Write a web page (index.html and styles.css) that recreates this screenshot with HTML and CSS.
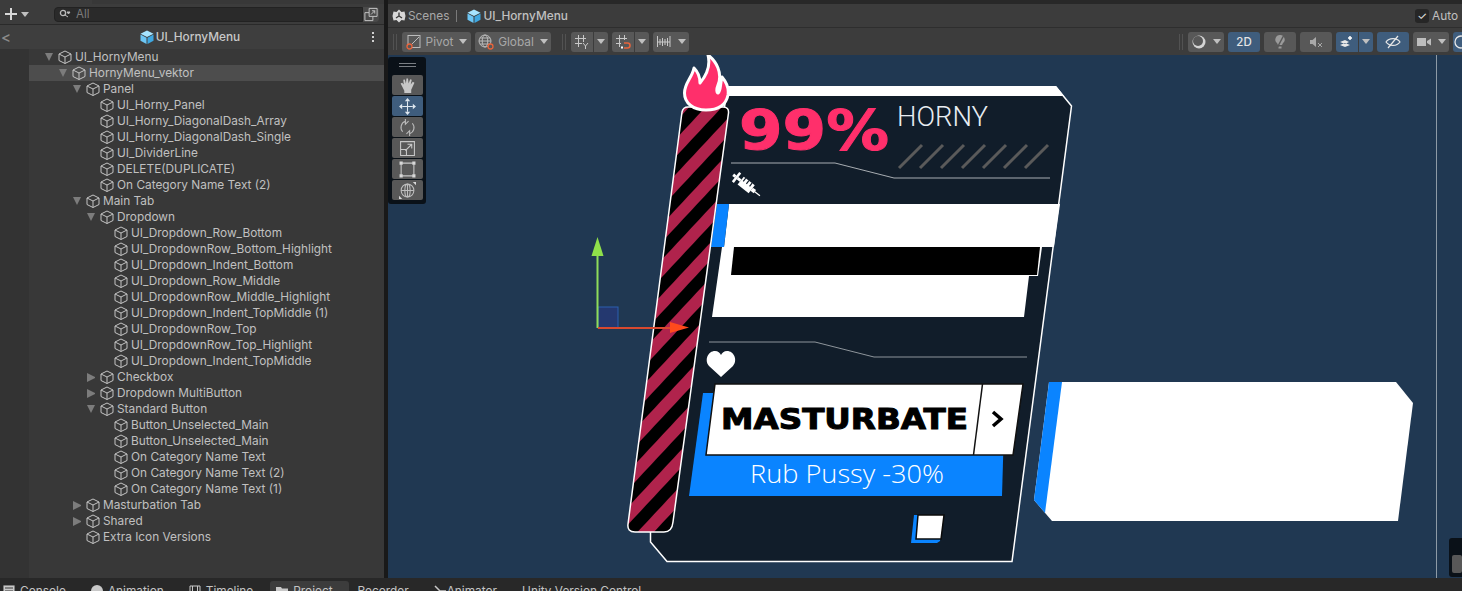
FILE: index.html
```html
<!DOCTYPE html>
<html lang="en">
<head>
    <meta charset="UTF-8">
    <title>UI_HornyMenu - Scene</title>
    <link rel="stylesheet" href="styles.css">
</head>
<body>

    <svg class="defs" width="0" height="0">
        <symbol id="cube" viewBox="0 0 14 14">
            <path d="M7 1 L13 4 V10.5 L7 13.5 L1 10.5 V4 Z M1 4 L7 7 L13 4 M7 7 V13.5" fill="none" stroke="currentColor" stroke-width="1" stroke-linejoin="round"/>
        </symbol>
        <symbol id="bluecube" viewBox="0 0 14 14">
            <path d="M7 .5 L13.5 3.8 L7 7 L.5 3.8 Z" fill="#a6e4ff"/>
            <path d="M.5 4.6 L6.5 7.7 V14 L.5 10.8 Z" fill="#6cc6f5"/>
            <path d="M13.5 4.6 L7.5 7.7 V14 L13.5 10.8 Z" fill="#3fa7e0"/>
        </symbol>
    </svg>

    <div class="app">
        <div class="main">

            <!-- hierarchy -->
            <div class="hierarchy">
                <div class="h-toolbar">
                    <svg class="plus" viewBox="0 0 12 12"><path d="M6 0 V12 M0 6 H12" stroke="#d8d8d8" stroke-width="2"/></svg>
                    <span class="caret small"></span>
                    <div class="search">
                        <svg class="search-icon" viewBox="0 0 12 12"><circle cx="4" cy="5" r="2.6" fill="none" stroke="#bbb" stroke-width="1.3"/><path d="M6 7 L9 9 M8 4 H11 L9.500 6 Z" stroke="#bbb" fill="#bbb"/></svg>
                        <span>All</span>
                    </div>
                    <svg class="popout" viewBox="0 0 16 16"><path d="M6 1.500 H14.500 V10 H10 V14.500 H1.500 V6 H6 Z M6 6 V10 H10 M8 8 L12 4 M9 4 H12 V7" fill="none" stroke="#c8c8c8"/></svg>
                </div>
                <div class="breadcrumb">
                    <span class="back">&lt;</span>
                    <div class="crumb-title">
                        <svg class="bluecube"><use href="#bluecube"/></svg>
                        <span>UI_HornyMenu</span>
                    </div>
                    <span class="dots"><i></i><i></i><i></i></span>
                </div>
                <div class="tree">
                    <div class="row d0 open"><span class="arrow"></span><svg class="cube"><use href="#cube"/></svg>UI_HornyMenu</div>
                    <div class="row d1 open selected"><span class="arrow"></span><svg class="cube"><use href="#cube"/></svg>HornyMenu_vektor</div>
                    <div class="row d2 open"><span class="arrow"></span><svg class="cube"><use href="#cube"/></svg>Panel</div>
                    <div class="row d3"><span class="arrow"></span><svg class="cube"><use href="#cube"/></svg>UI_Horny_Panel</div>
                    <div class="row d3"><span class="arrow"></span><svg class="cube"><use href="#cube"/></svg>UI_Horny_DiagonalDash_Array</div>
                    <div class="row d3"><span class="arrow"></span><svg class="cube"><use href="#cube"/></svg>UI_Horny_DiagonalDash_Single</div>
                    <div class="row d3"><span class="arrow"></span><svg class="cube"><use href="#cube"/></svg>UI_DividerLine</div>
                    <div class="row d3"><span class="arrow"></span><svg class="cube"><use href="#cube"/></svg>DELETE(DUPLICATE)</div>
                    <div class="row d3"><span class="arrow"></span><svg class="cube"><use href="#cube"/></svg>On Category Name Text (2)</div>
                    <div class="row d2 open"><span class="arrow"></span><svg class="cube"><use href="#cube"/></svg>Main Tab</div>
                    <div class="row d3 open"><span class="arrow"></span><svg class="cube"><use href="#cube"/></svg>Dropdown</div>
                    <div class="row d4"><span class="arrow"></span><svg class="cube"><use href="#cube"/></svg>UI_Dropdown_Row_Bottom</div>
                    <div class="row d4"><span class="arrow"></span><svg class="cube"><use href="#cube"/></svg>UI_DropdownRow_Bottom_Highlight</div>
                    <div class="row d4"><span class="arrow"></span><svg class="cube"><use href="#cube"/></svg>UI_Dropdown_Indent_Bottom</div>
                    <div class="row d4"><span class="arrow"></span><svg class="cube"><use href="#cube"/></svg>UI_Dropdown_Row_Middle</div>
                    <div class="row d4"><span class="arrow"></span><svg class="cube"><use href="#cube"/></svg>UI_DropdownRow_Middle_Highlight</div>
                    <div class="row d4"><span class="arrow"></span><svg class="cube"><use href="#cube"/></svg>UI_Dropdown_Indent_TopMiddle (1)</div>
                    <div class="row d4"><span class="arrow"></span><svg class="cube"><use href="#cube"/></svg>UI_DropdownRow_Top</div>
                    <div class="row d4"><span class="arrow"></span><svg class="cube"><use href="#cube"/></svg>UI_DropdownRow_Top_Highlight</div>
                    <div class="row d4"><span class="arrow"></span><svg class="cube"><use href="#cube"/></svg>UI_Dropdown_Indent_TopMiddle</div>
                    <div class="row d3 closed"><span class="arrow"></span><svg class="cube"><use href="#cube"/></svg>Checkbox</div>
                    <div class="row d3 closed"><span class="arrow"></span><svg class="cube"><use href="#cube"/></svg>Dropdown MultiButton</div>
                    <div class="row d3 open"><span class="arrow"></span><svg class="cube"><use href="#cube"/></svg>Standard Button</div>
                    <div class="row d4"><span class="arrow"></span><svg class="cube"><use href="#cube"/></svg>Button_Unselected_Main</div>
                    <div class="row d4"><span class="arrow"></span><svg class="cube"><use href="#cube"/></svg>Button_Unselected_Main</div>
                    <div class="row d4"><span class="arrow"></span><svg class="cube"><use href="#cube"/></svg>On Category Name Text</div>
                    <div class="row d4"><span class="arrow"></span><svg class="cube"><use href="#cube"/></svg>On Category Name Text (2)</div>
                    <div class="row d4"><span class="arrow"></span><svg class="cube"><use href="#cube"/></svg>On Category Name Text (1)</div>
                    <div class="row d2 closed"><span class="arrow"></span><svg class="cube"><use href="#cube"/></svg>Masturbation Tab</div>
                    <div class="row d2 closed"><span class="arrow"></span><svg class="cube"><use href="#cube"/></svg>Shared</div>
                    <div class="row d2"><span class="arrow"></span><svg class="cube"><use href="#cube"/></svg>Extra Icon Versions</div>
                </div>
            </div>

            <!-- scene -->
            <div class="scene">
                <div class="scene-top">
                    <svg class="unity" viewBox="0 0 14 14"><path d="M7 .5 L9.500 3 L12.500 2.500 L13.500 7 L12.500 11.500 L9.500 11 L7 13.500 L4.500 11 L1.500 11.500 L.5 7 L1.500 2.500 L4.500 3 Z" fill="#d8d8d8"/><path d="M7 3.500 V7 L4 9 M7 7 L10 9" stroke="#3c3c3c" stroke-width="1.400" fill="none"/></svg>
                    <span class="scenes-label">Scenes</span>
                    <span class="sep"></span>
                    <svg class="bluecube"><use href="#bluecube"/></svg>
                    <span class="prefab-name">UI_HornyMenu</span>
                    <label class="auto"><span class="check">&#10003;</span>Auto</label>
                </div>

                <div class="scene-toolbar">
                    <span class="grip"></span>
                    <div class="btn w-pivot">
                        <svg class="ico" viewBox="0 0 16 16"><rect x="2" y="1.500" width="12" height="12" fill="none" stroke="#bbb"/><path d="M3 13 L13 3" stroke="#bbb"/><circle cx="3.500" cy="12.500" r="2.500" fill="#585858" stroke="#e8643c" stroke-width="1.300"/></svg>
                        <span>Pivot</span><span class="caret"></span>
                    </div>
                    <div class="btn w-global">
                        <svg class="ico" viewBox="0 0 16 16"><circle cx="7" cy="7" r="6" fill="none" stroke="#bbb"/><ellipse cx="7" cy="7" rx="2.800" ry="6" fill="none" stroke="#bbb"/><path d="M1 7 H13 M2 4 H12 M2 10 H12" stroke="#bbb"/><circle cx="12.500" cy="12.500" r="2.500" fill="#585858" stroke="#e8643c" stroke-width="1.300"/></svg>
                        <span>Global</span><span class="caret"></span>
                    </div>
                    <span class="grip grip-mid"></span>
                    <div class="btn w-grid left">
                        <svg class="ico" viewBox="0 0 16 16"><path d="M1 4.500 H12 M1 9.500 H8 M4.500 1 V13 M9.500 1 V8 M9 9 L11.500 12 L14 9 M11.500 12 V15" fill="none" stroke="#c8c8c8"/></svg>
                    </div>
                    <div class="btn w-drop right"><span class="caret"></span></div>
                    <div class="btn w-grid left">
                        <svg class="ico" viewBox="0 0 16 16"><path d="M1 4.500 H12 M1 9.500 H6 M4.500 1 V13 M9.500 1 V6" fill="none" stroke="#c8c8c8"/><path d="M9 9 H12.500 A2.500 2.500 0 0 1 12.500 14 H9" fill="none" stroke="#e8643c" stroke-width="1.600"/><rect x="6" y="12.500" width="2" height="2" fill="#fff"/></svg>
                    </div>
                    <div class="btn w-drop right"><span class="caret"></span></div>
                    <div class="btn w-inc">
                        <svg class="ico" viewBox="0 0 16 16"><path d="M1.500 2 V13 M14 2 V13 M1 8 H14 M4 5 V11 M6.500 4 V12 M9 5 V11 M11.500 4 V12" fill="none" stroke="#c8c8c8"/></svg>
                        <span class="caret"></span>
                    </div>

                    <span class="spacer"></span>

                    <span class="grip"></span>
                    <div class="btn w-shade">
                        <svg class="ico" viewBox="0 0 16 16"><circle cx="8" cy="8" r="6.500" fill="#d4d4d4"/><circle cx="7" cy="7" r="5" fill="#585858"/></svg>
                        <span class="caret"></span>
                    </div>
                    <div class="btn w-32 on label-2d">2D</div>
                    <div class="btn w-32">
                        <svg class="ico" viewBox="0 0 16 16"><path d="M8 1 A4.500 4.500 0 0 1 11 9 L10 11 H6 L5 9 A4.500 4.500 0 0 1 8 1 Z M6.500 12.500 H9.500 V14.500 H6.500 Z" fill="#9a9a9a"/><path d="M12 1 L5 14" stroke="#585858" stroke-width="1.500"/></svg>
                    </div>
                    <div class="btn w-32">
                        <svg class="ico" viewBox="0 0 16 16"><path d="M2 6 H4.500 L8 3 V13 L4.500 10 H2 Z" fill="#a8a8a8"/><path d="M10 9 L14 13 M14 9 L10 13" stroke="#a8a8a8"/></svg>
                    </div>
                    <div class="btn w-fx on left">
                        <svg class="ico" viewBox="0 0 16 16"><path d="M1 8 L6 6 L10 8 L6 10 Z M1 11 L6 13 L11 11 L6 9 Z" fill="#e8e8e8"/><path d="M11 2 V6 M9 4 H13" stroke="#fff" stroke-width="1.500"/></svg>
                    </div>
                    <div class="btn w-drop on right"><span class="caret"></span></div>
                    <div class="btn w-32 on">
                        <svg class="ico" viewBox="0 0 16 16"><path d="M1 8 C4 3.500 12 3.500 15 8 C12 12.500 4 12.500 1 8 Z" fill="none" stroke="#e8e8e8" stroke-width="1.200"/><path d="M3 14 L13 2" stroke="#e8e8e8" stroke-width="1.200"/></svg>
                    </div>
                    <div class="btn w-cam">
                        <svg class="ico" viewBox="0 0 16 16"><rect x="1" y="4" width="9" height="8" fill="#bdbdbd"/><path d="M11 7 L15 4.500 V11.500 L11 9 Z" fill="#bdbdbd"/></svg>
                        <span class="caret"></span>
                    </div>
                    <div class="btn w-end on">
                        <svg class="ico" viewBox="0 0 16 16"><circle cx="8" cy="8" r="6" fill="none" stroke="#e8e8e8" stroke-width="1.300"/></svg>
                    </div>
                </div>

                <div class="viewport">
                    <!-- the drawn menu, coordinates are page pixels -->
                    <svg class="canvas" viewBox="388 55 1074 523">
                        <defs>
                            <pattern id="stripes" width="24" height="24" patternUnits="userSpaceOnUse" patternTransform="translate(650 501) rotate(-47)">
                                <rect width="24" height="24" fill="#b0234c"/>
                                <rect width="24" height="12" fill="#000"/>
                            </pattern>
                        </defs>

                        <line class="frame-line" x1="1436.500" y1="55" x2="1436.500" y2="578"/>

                        <!-- gizmo -->
                        <rect x="598" y="307" width="20" height="21" fill="#24386f" stroke="#2a5fb0"/>
                        <line x1="597.500" y1="328" x2="597.500" y2="256" stroke="#8fdc5a" stroke-width="2"/>
                        <path d="M597.500 237 L603.500 256 H591.500 Z" fill="#8fe04a"/>

                        <!-- right panel -->
                        <path d="M1049 382 H1396 L1413 403 L1398 521 H1052 L1034 500 Z" fill="#fff"/>
                        <path d="M1049 382 H1062 L1045 513 L1034 500 Z" fill="#0a84ff"/>

                        <!-- main panel -->
                        <path d="M728 87 H1056 L1071.500 106 L1012 561.500 H667 L650.500 542 V520 Z" fill="#111d2a" stroke="#fff" stroke-width="1.500"/>
                        <path d="M728 86 H1056 L1064 96 H727 Z" fill="#fff"/>

                        <!-- header -->
                        <text class="big" x="739" y="149" textLength="150" lengthAdjust="spacingAndGlyphs">99%</text>
                        <text class="horny" x="897" y="126" textLength="91" lengthAdjust="spacingAndGlyphs">HORNY</text>
                        <path class="dashes" d="M899 168 L922 145 M920 168 L943 145 M941 168 L964 145 M962 168 L985 145 M983 168 L1006 145 M1004 168 L1027 145 M1025 168 L1048 145"/>
                        <path class="divider" d="M731 163 H835 L894 178 H1050"/>
                        <g transform="translate(745 184) rotate(38)" fill="#fff">
                            <rect x="-15" y="-1.500" width="3" height="3"/>
                            <rect x="-12" y="-6" width="2.500" height="12"/>
                            <rect x="-9.500" y="-1.500" width="4" height="3"/>
                            <rect x="-5.500" y="-5" width="14" height="10"/>
                            <rect x="8.500" y="-2" width="4" height="4"/>
                            <rect x="12" y="-.6" width="7" height="1.300"/>
                            <path d="M-3 -5 V-1 M1 -5 V-1 M5 -5 V-1" stroke="#111d2a" stroke-width="1.200"/>
                        </g>

                        <!-- white rows -->
                        <path d="M729 204 H1060 L1054 247 H724 Z" fill="#fff"/>
                        <path d="M717 204 H729 L724 247 H711 Z" fill="#0a84ff"/>
                        <path d="M722 247 H1042 L1038 276 H1029 L1024 317 H712 Z" fill="#fff"/>
                        <path d="M734 247 H1040 L1037 275 H731 Z" fill="#000"/>

                        <!-- lower part -->
                        <path class="divider thin" d="M709 342 H815 L874 357 H1027"/>
                        <path d="M721 377 L709 366 C704 360 708 351 715 351 C718 351 720 353 721 355 C722 353 724 351 727 351 C734 351 738 360 733 366 Z" fill="#fff"/>

                        <path d="M703 393 H1005 L1002 496 H689 Z" fill="#0a84ff"/>
                        <path d="M715 384 H1023 L1013 455 H706 Z" fill="#fff" stroke="#111" stroke-width="1.500"/>
                        <line x1="982.500" y1="384" x2="973.500" y2="455" stroke="#111" stroke-width="1.500"/>
                        <text class="masturbate" x="721" y="429" textLength="247" lengthAdjust="spacingAndGlyphs">MASTURBATE</text>
                        <path d="M993 412 L1001 419 L993 426" fill="none" stroke="#000" stroke-width="3.500"/>
                        <text class="rub" x="750" y="483" textLength="194" lengthAdjust="spacingAndGlyphs">Rub Pussy -30%</text>

                        <path d="M914 515 H943 L940 541 L937 543 H911 Z" fill="#0a84ff"/>
                        <path d="M918 515 H944 L941 539 H916 Z" fill="#fff" stroke="#0b0b0b" stroke-width="1.500"/>

                        <!-- candle -->
                        <path d="M682 112 Q683 107 688 107 H723 Q729 107 728.500 113 L673 522 Q672 532 664 532 H635 Q627 532 628 524 Z" fill="url(#stripes)" stroke="#fff" stroke-width="1.500"/>
                        <path d="M706 110 C693 110 684.500 103 684.500 93 C684.500 83 692 78 694 68 C698 72 700 77 700 83 C706 76 711 67 708 55 C716 61 723 73 718 85 C716 90 717 93 718 93 C721 91 720 84 722 77 C727 83 729 89 728 95 C726 105 718 110 706 110 Z" fill="#ff2f6b" stroke="#fff" stroke-width="3" stroke-linejoin="round"/>

                        <!-- x arrow over the candle -->
                        <line x1="598" y1="328" x2="672" y2="328" stroke="#d8492f" stroke-width="2"/>
                        <path d="M689 327.500 L670 322 V333 Z" fill="#ff4a1c"/>
                    </svg>

                    <div class="tools">
                        <div class="tools-grip"></div>
                        <div class="tool">
                            <svg viewBox="0 0 16 16"><path d="M3 9 L1.500 6 L3 5.500 L4.500 7 L4 2.500 L5.500 2.300 L6.500 6 L7 1.300 L8.500 1.300 L9 6 L10.500 2 L12 2.500 L11 7 L13 4.500 L14.500 5.500 L11.500 12 V15 H5 V13 Z" fill="#c8c8c8"/></svg>
                        </div>
                        <div class="tool active">
                            <svg viewBox="0 0 16 16"><path d="M8 3 V13 M3 8 H13" stroke="#dfe8f0" stroke-width="1"/><path d="M8 0 L10.500 3 H5.500 Z M8 16 L10.500 13 H5.500 Z M0 8 L3 5.500 V10.500 Z M16 8 L13 5.500 V10.500 Z" fill="#dfe8f0"/></svg>
                        </div>
                        <div class="tool">
                            <svg viewBox="0 0 16 16"><path d="M3.500 12 A6 6 0 0 1 6 2.200 M12.500 4 A6 6 0 0 1 10 13.800 M6 0 V5 L9 2 M10 16 V11 L7 14" fill="none" stroke="#bdbdbd"/></svg>
                        </div>
                        <div class="tool">
                            <svg viewBox="0 0 16 16"><path d="M1.500 1.500 H14.500 V14.500 H1.500 Z M1.500 9 H7 V14.500 M6 10 L12 4 M8 4 H12 V8" fill="none" stroke="#c8c8c8"/></svg>
                        </div>
                        <div class="tool">
                            <svg viewBox="0 0 16 16"><path d="M3 2 H13 M3 14 H13 M2 3 V13 M14 3 V13" stroke="#c8c8c8"/><path d="M.5 .5 H3.500 V3.500 H.5 Z M12.500 .5 H15.500 V3.500 H12.500 Z M.5 12.500 H3.500 V15.500 H.5 Z M12.500 12.500 H15.500 V15.500 H12.500 Z" fill="#d8d8d8"/></svg>
                        </div>
                        <div class="tool">
                            <svg viewBox="0 0 16 16"><circle cx="8" cy="8" r="6" fill="none" stroke="#bdbdbd"/><ellipse cx="8" cy="8" rx="2.500" ry="6" fill="none" stroke="#bdbdbd"/><path d="M2 8 H14 M8 2 V14" stroke="#bdbdbd"/><path d="M0 16 L3 16 L0 13 Z M16 0 L13 0 L16 3 Z" fill="#d8d8d8"/></svg>
                        </div>
                    </div>

                    <div class="overlay-corner"><div class="tool small"></div></div>
                </div>
            </div>
        </div>

        <div class="tabs">
            <div class="tab"><svg viewBox="0 0 12 12"><path d="M0 0 H12 V12 H0 Z M2 3 H10 M2 6 H10" fill="#c8c8c8" stroke="#383838"/></svg>Console</div>
            <div class="tab"><svg viewBox="0 0 12 12"><circle cx="6" cy="6" r="6" fill="#c8c8c8"/></svg>Animation</div>
            <div class="tab"><svg viewBox="0 0 12 12"><path d="M1 1 H11 V11 H1 Z M3.500 1 V11 M8.500 1 V11" fill="none" stroke="#c8c8c8"/></svg>Timeline</div>
            <div class="tab current"><svg viewBox="0 0 12 12"><path d="M0 2 H5 L6 3.500 H12 V12 H0 Z" fill="#c8c8c8"/></svg>Project</div>
            <div class="tab">Recorder</div>
            <div class="tab tight"><svg viewBox="0 0 12 12"><path d="M1 1 L6 6 H12 M6 6 L3 11" fill="none" stroke="#c8c8c8" stroke-width="1.500"/></svg>Animator</div>
            <div class="tab">Unity Version Control</div>
        </div>
    </div>

</body>
</html>
```

FILE: styles.css
```css
* {
    box-sizing: border-box;
}

html, body {
    margin: 0;
    height: 100%;
    overflow: hidden;
}

body {
    font-family: Inter, 'Noto Sans', sans-serif;
    font-size: 11.85px;
    background-color: #282828;
    color: #c0c0c0;
}

.defs {
    display: block;
    height: 0;
}

.app {
    height: 591px;
    display: flex;
    flex-direction: column;
}

.main {
    height: 578px;
    display: flex;
}

/* hierarchy */
.hierarchy {
    width: 385px;
    padding-top: 4px;
    display: flex;
    flex-direction: column;
    background-color: #383838;
    border-right: 1px solid #191919;
    background-image: linear-gradient(#3c3c3c, #3c3c3c);
    background-size: 92px 4px;
    background-repeat: no-repeat;
}

.h-toolbar {
    height: 21px;
    display: flex;
    align-items: center;
    padding-left: 5px;
    background-color: #3c3c3c;
    border-bottom: 1px solid #2a2a2a;
}

.plus {
    width: 12px;
    height: 12px;
    flex: none;
}

.caret {
    width: 0;
    height: 0;
    margin-left: 6px;
    border-left: 4.5px solid transparent;
    border-right: 4.5px solid transparent;
    border-top: 5px solid #c0c0c0;
}

.caret.small {
    margin-left: 4px;
}

.search {
    width: 309px;
    height: 15px;
    margin-left: 25px;
    display: flex;
    align-items: center;
    gap: 5px;
    padding-left: 4px;
    background-color: #2a2a2a;
    border: 1px solid #222;
    border-radius: 4px 0 0 4px;
    color: #7c7c7c;
    font-size: 11.5px;
}

.search-icon {
    width: 12px;
    height: 12px;
}

.popout {
    width: 16px;
    height: 15px;
    background-color: #4a4a4a;
    border-radius: 0 4px 4px 0;
}

.breadcrumb {
    height: 24px;
    position: relative;
    display: flex;
    align-items: center;
    justify-content: center;
    background-color: #3e3e3e;
    font-weight: 500;
    color: #c8c8c8;
}

.back {
    position: absolute;
    left: 1px;
    color: #8a8a8a;
    font-size: 15px;
}

.crumb-title {
    display: flex;
    align-items: center;
    gap: 2px;
    margin-left: -4px;
}

.bluecube {
    width: 14px;
    height: 14px;
    flex: none;
}

.dots {
    position: absolute;
    right: 10px;
    display: flex;
    flex-direction: column;
    gap: 2px;
}

.dots i {
    display: block;
    width: 2px;
    height: 2px;
    background-color: #d0d0d0;
}

.tree {
    flex: 1;
    border-left: 29px solid #333;
}

.row {
    height: 16px;
    display: flex;
    align-items: center;
    white-space: nowrap;
}

.row.selected {
    background-color: #4d4d4d;
}

.arrow {
    width: 8px;
    height: 9px;
    margin-right: 5px;
}

.row.open .arrow {
    border-left: 4.5px solid transparent;
    border-right: 4.5px solid transparent;
    border-top: 8px solid #7c7c7c;
}

.row.closed .arrow {
    border-top: 4.5px solid transparent;
    border-bottom: 4.5px solid transparent;
    border-left: 8px solid #7c7c7c;
}

.cube {
    width: 14px;
    height: 14px;
    margin-right: 3px;
    color: #c4c4c4;
}

.d0 { padding-left: 16px; }
.d1 { padding-left: 30px; }
.d2 { padding-left: 44px; }
.d3 { padding-left: 58px; }
.d4 { padding-left: 72px; }

/* scene */
.scene {
    flex: 1;
    min-width: 0;
    display: flex;
    flex-direction: column;
    border-left: 3px solid #191919;
}

.scene-top {
    height: 24px;
    margin-top: 4px;
    display: flex;
    align-items: center;
    padding-left: 4px;
    background-color: #3c3c3c;
    border-bottom: 1px solid #2e2e2e;
    white-space: nowrap;
}

.unity {
    width: 14px;
    height: 14px;
    margin-right: 2px;
}

.scenes-label {
    color: #a8a8a8;
}

.sep {
    width: 1px;
    height: 12px;
    margin: 0 10px 0 7px;
    background-color: #7a7a7a;
}

.prefab-name {
    margin-left: 2px;
    font-weight: 500;
    color: #c0c0c0;
}

.auto {
    margin-left: auto;
    display: flex;
    align-items: center;
    gap: 3px;
    color: #c0c0c0;
    width: 47px;
}

.check {
    width: 14px;
    height: 14px;
    background-color: #262626;
    border-radius: 3px;
    color: #e8e8e8;
    font-size: 11px;
    line-height: 14px;
    text-align: center;
    flex: none;
}

.scene-toolbar {
    height: 27px;
    display: flex;
    align-items: center;
    background-color: #3c3c3c;
    overflow: hidden;
}

.spacer {
    flex: 1;
}

.grip {
    width: 4px;
    height: 16px;
    margin: 0 5px;
    border-left: 1px solid #525252;
    border-right: 1px solid #525252;
    flex: none;
}

.grip-mid {
    margin: 0 5px 0 7px;
}

.btn {
    height: 20px;
    display: flex;
    align-items: center;
    justify-content: center;
    gap: 4px;
    flex: none;
    background-color: #585858;
    border-radius: 3px;
    color: #a8a8a8;
    margin-right: 4px;
}

.btn .caret {
    margin-left: 2px;
}

.btn.left {
    border-radius: 3px 0 0 3px;
    margin-right: 1px;
}

.btn.right {
    border-radius: 0 3px 3px 0;
}

.btn.right .caret {
    margin-left: 0;
}

.btn.on {
    background-color: #3f5d7d;
    color: #e4e4e4;
}

.ico {
    width: 16px;
    height: 16px;
    flex: none;
}

.label-2d {
    font-weight: 500;
    font-size: 11.5px;
}

.w-pivot { width: 69px; }
.w-global { width: 76px; }
.w-grid { width: 22px; }
.w-drop { width: 14px; }
.w-inc { width: 36px; margin-right: 0; }
.w-shade { width: 36px; }
.w-32 { width: 32px; }
.w-fx { width: 22px; }
.w-cam { width: 36px; }
.w-end { width: 9px; margin-right: 0; border-radius: 3px 0 0 3px; justify-content: flex-start; overflow: hidden; }

.viewport {
    flex: 1;
    position: relative;
    overflow: hidden;
    background-color: #203852;
}

.canvas {
    display: block;
    width: 1074px;
    height: 523px;
}

.frame-line {
    stroke: #8d9aa6;
    stroke-width: 1;
}

.big {
    font-family: 'DejaVu Sans', sans-serif;
    font-weight: 700;
    font-size: 56px;
    fill: #ff2f6b;
    stroke: #ff2f6b;
    stroke-width: 1;
}

.horny {
    font-family: Roboto, sans-serif;
    font-weight: 300;
    font-size: 27px;
    fill: #e8edf2;
}

.dashes {
    fill: none;
    stroke: #5a5a5a;
    stroke-width: 3;
}

.divider {
    fill: none;
    stroke: #a8adb2;
    stroke-width: 1;
}

.divider.thin {
    stroke: #8e959b;
}

.masturbate {
    font-family: 'DejaVu Sans', sans-serif;
    font-weight: 700;
    font-size: 29px;
    fill: #000;
    stroke: #000;
    stroke-width: 1;
}

.rub {
    font-family: 'Open Sans', sans-serif;
    font-weight: 300;
    font-size: 26px;
    fill: #fff;
}

/* tool palette floats over the viewport */
.tools {
    position: absolute;
    left: 0;
    top: 2px;
    width: 38px;
    height: 147px;
    padding: 0 3px 0 4px;
    display: flex;
    flex-direction: column;
    gap: 1px;
    background-color: #0a1118;
    border-radius: 3px;
}

.tools-grip {
    height: 4px;
    margin: 6px 7px 7px;
    border-top: 1px solid #7a7f84;
    border-bottom: 1px solid #7a7f84;
}

.tool {
    height: 20px;
    display: flex;
    align-items: center;
    justify-content: center;
    background-color: #585858;
    border-radius: 2px;
}

.tool.active {
    background-color: #3f5d7d;
}

.tool svg {
    width: 17px;
    height: 17px;
}

.overlay-corner {
    position: absolute;
    right: 0;
    top: 483px;
    width: 13px;
    height: 39px;
    padding: 17px 0 0 3px;
    background-color: #0a1118;
    border-radius: 3px 0 0 3px;
}

.tool.small {
    height: 18px;
}

/* bottom tabs, cut off by the window */
.tabs {
    flex: 1;
    display: flex;
    align-items: flex-start;
    padding-top: 3px;
    background-color: #282828;
    overflow: hidden;
    white-space: nowrap;
}

.tab {
    height: 20px;
    display: flex;
    align-items: center;
    gap: 5px;
    padding: 0 13px 0 3px;
    margin-right: 9px;
    color: #c4c4c4;
}

.tab.current {
    background-color: #3c3c3c;
    border-radius: 3px 3px 0 0;
    margin-left: -5px;
    margin-right: 6px;
    padding: 0 16px 0 6px;
}

.tab.tight {
    gap: 1px;
}

.tab svg {
    width: 12px;
    height: 12px;
}
```
